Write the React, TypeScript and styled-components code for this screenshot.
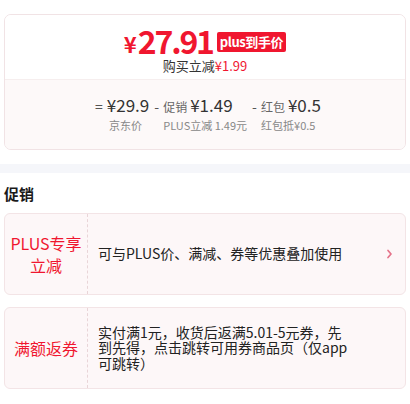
import React from "react";
import styled, { createGlobalStyle } from "styled-components";

const Global = createGlobalStyle`
  html, body { margin: 0; padding: 0; background: #fff; }
  body { font-family: "Noto Sans CJK SC", "Noto Sans", sans-serif; color: #1a1a1a; }
`;

const RED = "#f0162f";

const Page = styled.div`
  width: 410px;
  padding-top: 14px;
`;

const PriceCard = styled.div`
  margin: 0 4px;
  border: 1px solid #f1e3e5;
  border-radius: 7px;
  overflow: hidden;
`;

const PriceTop = styled.div`
  height: 64px;
  background: #fff;
  display: flex;
  flex-direction: column;
  align-items: center;
  padding-top: 9px;
  box-sizing: border-box;
`;

const PriceLine = styled.div`
  display: flex;
  align-items: center;
  height: 32px;
`;

const Yen = styled.span`
  color: ${RED};
  font-size: 22px;
  font-weight: 700;
  line-height: 22px;
  margin-top: 5px;
  margin-right: 1px;
`;

const BigPrice = styled.span`
  color: ${RED};
  font-size: 32px;
  font-weight: 700;
  letter-spacing: -2.2px;
  line-height: 32px;
`;

const Badge = styled.span`
  background: ${RED};
  color: #fff;
  font-size: 13px;
  font-weight: 700;
  line-height: 20px;
  padding: 0 3px;
  letter-spacing: -0.4px;
  border-radius: 2px;
  margin-left: 4px;
  margin-top: 4px;
`;

const SubLine = styled.div`
  font-size: 13px;
  color: #333;
  line-height: 16px;
  margin-top: 2px;
`;

const RedText = styled.span`
  color: ${RED};
`;

const PriceBottom = styled.div`
  background: #fdf9f9;
  border-top: 1px solid #f6eeee;
  height: 70px;
  display: flex;
  justify-content: center;
  padding: 12px 0 0 6px;
  box-sizing: border-box;
  gap: 5px;
`;

const Col = styled.div`
  display: flex;
  flex-direction: column;
`;

const ColTop = styled.div`
  display: flex;
  align-items: baseline;
  color: #333;
  white-space: nowrap;
  height: 24px;
`;

const Op = styled.span`
  font-size: 14px;
  color: #555;
  margin-right: 4px;
`;

const Small = styled.span`
  font-size: 12px;
  color: #666;
  margin-right: 3px;
`;

const Val = styled.span`
  font-size: 17px;
  color: #333;
`;

const ColLabel = styled.div<{ $indent: number }>`
  font-size: 11px;
  color: #888;
  line-height: 14px;
  margin-top: 2px;
  padding-left: ${(p) => p.$indent}px;
  white-space: nowrap;
`;

const GrayBar = styled.div`
  height: 9px;
  background: #f5f6fa;
  margin-top: 14px;
`;

const Heading = styled.div`
  font-size: 15px;
  font-weight: 700;
  color: #1a1a1a;
  padding: 10px 4px 0;
  line-height: 22px;
`;

const PromoList = styled.div`
  display: flex;
  flex-direction: column;
  gap: 12px;
  margin: 8px 4px 0;
`;

const PromoCard = styled.div`
  display: flex;
  height: 82px;
  background: #fdf7f8;
  border: 1px solid #f3e4e6;
  border-radius: 6px;
  box-sizing: border-box;
`;

const PromoTag = styled.div`
  width: 82px;
  flex: none;
  border-right: 1px dashed #e9d5d8;
  display: flex;
  align-items: center;
  justify-content: center;
  text-align: center;
  color: ${RED};
  font-size: 16px;
  line-height: 22px;
`;

const PromoBody = styled.div`
  flex: 1;
  display: flex;
  align-items: center;
  padding: 0 51px 0 10px;
  font-size: 14px;
  line-height: 15.5px;
  color: #222;
  position: relative;
`;

const Chevron = styled.svg`
  position: absolute;
  right: 12px;
  top: 50%;
  transform: translateY(-50%);
`;

export default function App() {
  return (
    <Page>
      <Global />
      <PriceCard>
        <PriceTop>
          <PriceLine>
            <Yen>¥</Yen>
            <BigPrice>27.91</BigPrice>
            <Badge>plus到手价</Badge>
          </PriceLine>
          <SubLine>
            购买立减<RedText>¥1.99</RedText>
          </SubLine>
        </PriceTop>
        <PriceBottom>
          <Col>
            <ColTop>
              <Op>=</Op>
              <Val>¥29.9</Val>
            </ColTop>
            <ColLabel $indent={14}>京东价</ColLabel>
          </Col>
          <Col>
            <ColTop>
              <Op>-</Op>
              <Small>促销</Small>
              <Val>¥1.49</Val>
            </ColTop>
            <ColLabel $indent={9}>PLUS立减 1.49元</ColLabel>
          </Col>
          <Col>
            <ColTop>
              <Op>-</Op>
              <Small>红包</Small>
              <Val>¥0.5</Val>
            </ColTop>
            <ColLabel $indent={9}>红包抵¥0.5</ColLabel>
          </Col>
        </PriceBottom>
      </PriceCard>
      <GrayBar />
      <Heading>促销</Heading>
      <PromoList>
        <PromoCard>
          <PromoTag>
            PLUS专享
            <br />
            立减
          </PromoTag>
          <PromoBody>
            可与PLUS价、满减、券等优惠叠加使用
            <Chevron width="7" height="11" viewBox="0 0 7 11">
              <path d="M2 2 L5 5.5 L2 9" fill="none" stroke="#e5738a" strokeWidth="1.7" strokeLinecap="round" strokeLinejoin="round" />
            </Chevron>
          </PromoBody>
        </PromoCard>
        <PromoCard>
          <PromoTag>满额返券</PromoTag>
          <PromoBody>实付满1元，收货后返满5.01-5元券，先到先得，点击跳转可用券商品页（仅app可跳转）</PromoBody>
        </PromoCard>
      </PromoList>
    </Page>
  );
}
